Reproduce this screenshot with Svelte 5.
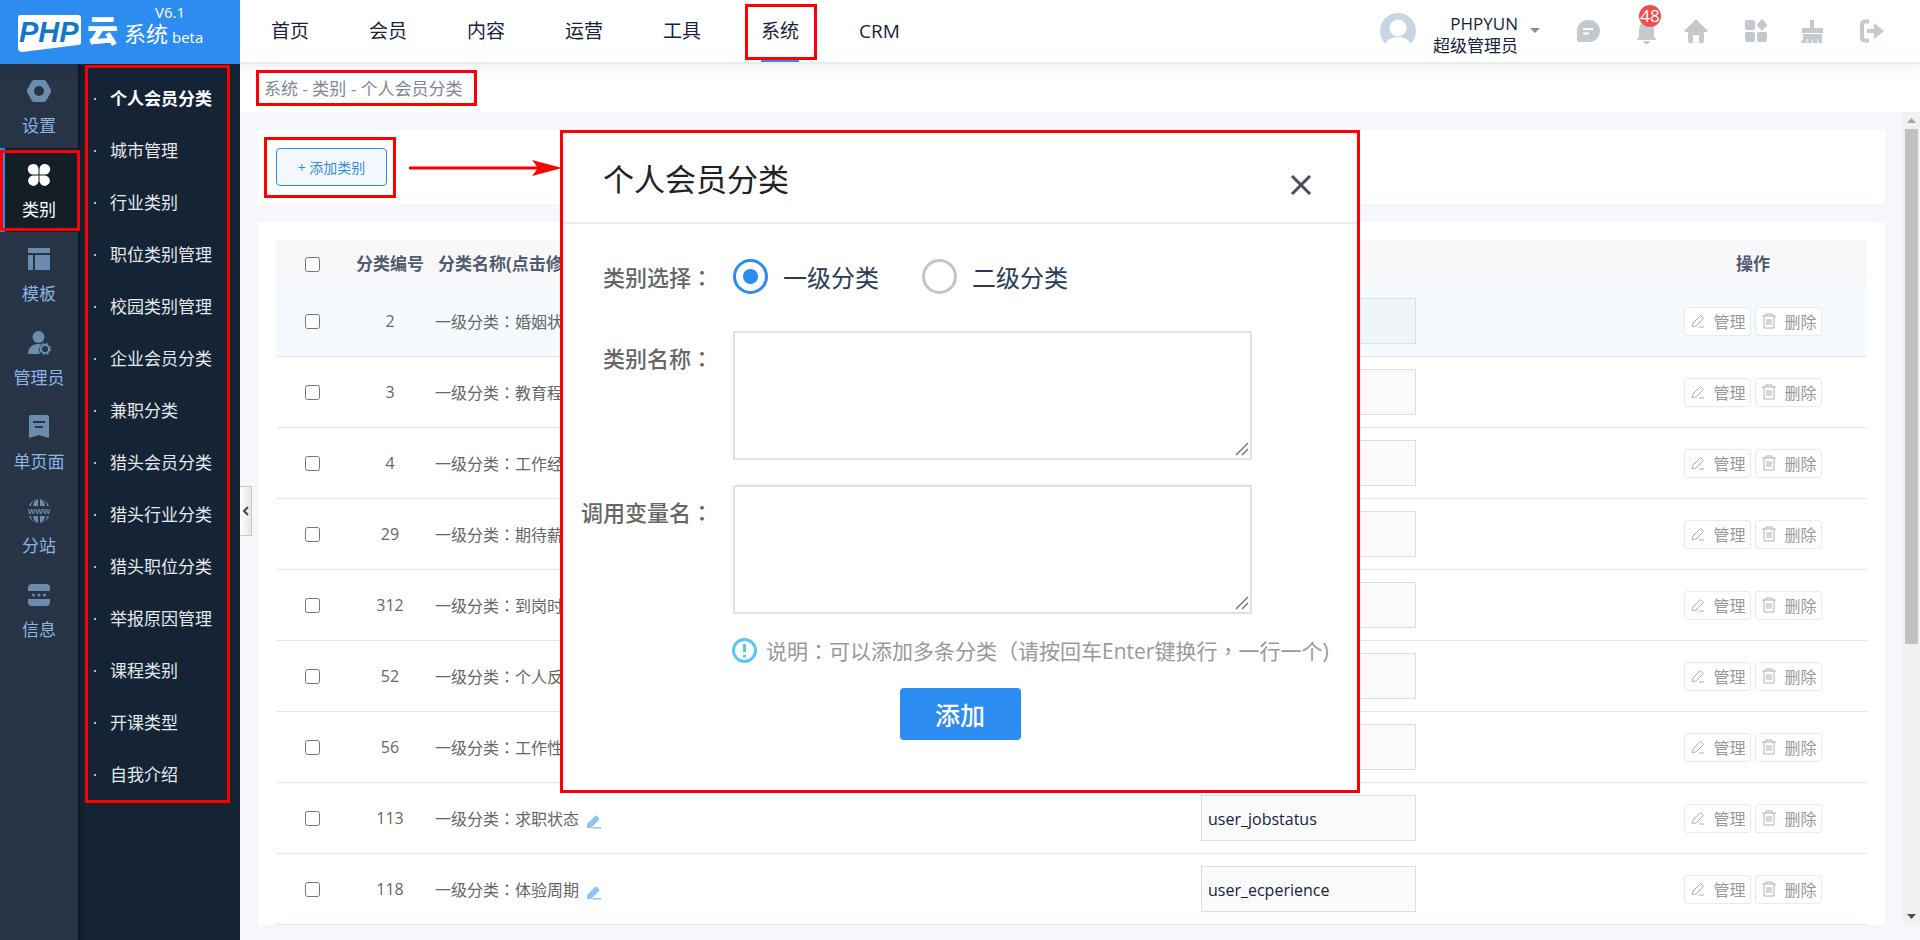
<script>
  const topNav = ["首页", "会员", "内容", "运营", "工具", "系统", "CRM"];
  const sideNav = [
    { label: "设置", icon: "setting" },
    { label: "类别", icon: "category" },
    { label: "模板", icon: "template" },
    { label: "管理员", icon: "admin" },
    { label: "单页面", icon: "page" },
    { label: "分站", icon: "site" },
    { label: "信息", icon: "message" },
  ];
  const subNav = [
    "个人会员分类",
    "城市管理",
    "行业类别",
    "职位类别管理",
    "校园类别管理",
    "企业会员分类",
    "兼职分类",
    "猎头会员分类",
    "猎头行业分类",
    "猎头职位分类",
    "举报原因管理",
    "课程类别",
    "开课类型",
    "自我介绍",
  ];
  const rows = [
    { id: 2, name: "婚姻状况", key: "user_marriage" },
    { id: 3, name: "教育程度", key: "user_edu" },
    { id: 4, name: "工作经验", key: "user_word" },
    { id: 29, name: "期待薪资", key: "user_salary" },
    { id: 312, name: "到岗时间", key: "user_report" },
    { id: 52, name: "个人反馈", key: "user_message" },
    { id: 56, name: "工作性质", key: "user_type" },
    { id: 113, name: "求职状态", key: "user_jobstatus" },
    { id: 118, name: "体验周期", key: "user_ecperience" },
  ];
  let level = "1";
</script>

<header class="header">
  <a class="logo" href="#home" aria-label="PHP云系统">
    <svg width="240" height="64" viewBox="0 0 240 64">
      <path d="M20 15h58q3 0 3 3v24q0 3-3 3l-56 7q-4 0-4-4V18q0-3 2-3z" fill="#fff" />
      <text class="logo-php" x="19" y="42" fill="#1279c9">PHP</text>
      <text class="logo-yun" x="87" y="42" fill="#fff">云</text>
      <text class="logo-sys" x="124" y="42" fill="#fff">系统</text>
      <text class="logo-ver" x="155" y="18" fill="#fff">V6.1</text>
      <text class="logo-ver" x="172" y="43" fill="#fff">beta</text>
    </svg>
  </a>
  <nav class="top-nav">
    {#each topNav as item}
      <a href="#{item}" class:active={item === "系统"}>
        <span>{item}</span>
        {#if item === "系统"}<i class="mark"></i>{/if}
      </a>
    {/each}
  </nav>
  <button class="user">
    <svg width="36" height="36" viewBox="0 0 36 36">
      <circle cx="18" cy="18" r="18" fill="#c8d6e4" />
      <circle cx="18" cy="15" r="8.500" fill="#fff" />
      <path d="M5 32q3-8 13-8t13 8v4H5z" fill="#fff" />
    </svg>
    <span class="user-name">PHPYUN<br />超级管理员</span>
    <svg width="10" height="6" viewBox="0 0 10 6"><path d="M0 0h10L5 5z" fill="#878d99" /></svg>
  </button>
  <div class="tools">
    <button aria-label="消息">
      <svg viewBox="0 0 24 24">
        <path d="M11.500 1H13a10.500 10.500 0 0 1 0 22H3a2 2 0 0 1-2-2v-9.500A10.500 10.500 0 0 1 11.500 1z" />
        <path d="M7 10h10M7 14.500h6" class="cut" />
      </svg>
    </button>
    <button class="bell" aria-label="通知">
      <svg viewBox="0 0 24 24">
        <path d="M10.500 2.500a7.500 7.500 0 0 0-7.500 8V18L1 20v1h19v-1l-2-2v-7.500a7.500 7.500 0 0 0-7.500-8zM7 22h7q-1 3-3.500 3T7 22z" />
      </svg>
      <b>48</b>
    </button>
    <button aria-label="首页">
      <svg viewBox="0 0 24 24">
        <path d="M12 0 1 11q-1 2 1 2h2v9q0 2 2 2h3v-8h6v8h3q2 0 2-2v-9h2q2 0 1-2z" />
      </svg>
    </button>
    <button aria-label="应用">
      <svg viewBox="0 0 24 24">
        <rect x="1" y="1" width="10" height="10" rx="2" />
        <rect x="1" y="13" width="10" height="10" rx="2" />
        <rect x="13" y="13" width="10" height="10" rx="2" />
        <path d="m18 0 5.500 6-5.500 6-5.500-6z" />
      </svg>
    </button>
    <button aria-label="清理">
      <svg viewBox="0 0 24 24">
        <path d="M10 1h4v8h9v5H2V9h8zM3 15h19v9H1q3-4 2-9z" />
        <path d="m8 20-2 4M13 20l-1 4M18 20v4" class="cut thin" />
      </svg>
    </button>
    <button aria-label="退出">
      <svg viewBox="0 0 24 24">
        <path d="M9 2.500H5q-3 0-3 3v13q0 3 3 3h4" class="line" />
        <path d="M14 4v6H7v4h7v6l10-8z" />
      </svg>
    </button>
  </div>
</header>

<div class="layout">
  <nav class="side">
    {#each sideNav as item}
      <a href="#{item.icon}" class:active={item.icon === "category"}>
        <svg width="24" height="24" viewBox="0 0 24 24">
          {#if item.icon === "setting"}
            <path
              fill-rule="evenodd"
              d="M7 1h10q1 0 2 1l5 9q.500 1 0 2l-5 9q-1 1-2 1H7q-1 0-2-1l-5-9q-.500-1 0-2l5-9q1-1 2-1zM12 7a5 5 0 1 0 0 10 5 5 0 0 0 0-10z"
            />
          {:else if item.icon === "category"}
            <path
              d="M6 1a5 5 0 0 1 5.500 5v5.500H6A5.200 5.200 0 0 1 6 1zM18 1a5.200 5.200 0 0 1 0 10.500h-5.500V6A5 5 0 0 1 18 1zM6 12.500h5.500V18A5.200 5.200 0 1 1 6 12.500zM12.500 12.500H18A5.200 5.200 0 1 1 12.500 18z"
            />
          {:else if item.icon === "template"}
            <path d="M1 1h22v5H1zM1 8h5v15H1zM8 8h15v15H8z" />
          {:else if item.icon === "admin"}
            <circle cx="11.500" cy="6" r="6" />
            <path d="M1 23q0-9 9-10h5a7 7 0 0 0-2 10z" />
            <circle cx="18" cy="18" r="4" class="ring" />
            <circle cx="18" cy="18" r="5" class="teeth" />
          {:else if item.icon === "page"}
            <path fill-rule="evenodd" d="M4 0h16q2 0 2 2v21l-10-3-10 3V2q0-2 2-2zM6 6v2h12V6zM8 11v2h8v-2z" />
          {:else if item.icon === "site"}
            <path
              d="M11 0v7H6q1-6 5-7zM13 0q4 1 5 7h-5zM8 1Q4 3 4 7H2Q4 2 8 1zM16 1q4 1 6 6h-2q0-4-4-6zM11 24v-7H6q1 6 5 7zM13 24q4-1 5-7h-5zM8 23q-4-2-4-6H2q2 5 6 6zM16 23q4-1 6-6h-2q0 4-4 6z"
            />
            <text x="12" y="15" text-anchor="middle">WWW</text>
          {:else}
            <path d="M5 1h14q4 0 4 4v3H1V5q0-4 4-4zM1 16h22v3q0 4-4 4H5q-4 0-4-4z" />
            <circle cx="6.500" cy="12" r="1.500" />
            <circle cx="12" cy="12" r="1.500" />
            <circle cx="17.500" cy="12" r="1.500" />
          {/if}
        </svg>
        <span>{item.label}</span>
        {#if item.icon === "category"}<i class="mark"></i>{/if}
      </a>
    {/each}
  </nav>

  <nav class="sub">
    <ul>
      {#each subNav as item, i}
        <li><a href="#{item}" class:active={i === 0}>{item}</a></li>
      {/each}
    </ul>
    <i class="mark"></i>
    <button class="collapse" aria-label="收起">
      <svg width="6" height="10" viewBox="0 0 6 10"><path d="M5 1 1 5l4 4" /></svg>
    </button>
  </nav>

  <main>
    <div class="crumb"><span>系统 - 类别 - 个人会员分类<i class="mark"></i></span></div>
    <div class="content">
      <div class="panels">
        <section class="card toolbar">
          <button class="add">+ 添加类别<i class="mark"></i></button>
        </section>
        <section class="card">
          <table>
            <colgroup>
              <col class="c-check" />
              <col class="c-id" />
              <col class="c-name" />
              <col />
              <col class="c-ops" />
            </colgroup>
            <thead>
              <tr>
                <th><input type="checkbox" aria-label="全选" /></th>
                <th>分类编号</th>
                <th class="name">分类名称(点击修改)</th>
                <th class="key">调用变量名</th>
                <th>操作</th>
              </tr>
            </thead>
            <tbody>
              {#each rows as row, i}
                <tr class:hover={i === 0}>
                  <td><input type="checkbox" aria-label={row.name} /></td>
                  <td>{row.id}</td>
                  <td class="name">
                    一级分类<span class="mid">：</span>{row.name}
                    <svg class="pen" width="14" height="14" viewBox="0 0 14 14">
                      <path d="M0 13V9l8-8q1-1 2 0l2 2q1 1 0 2l-8 8zM6 12h8v1.500H5z" />
                    </svg>
                  </td>
                  <td class="key"><input type="text" value={row.key} aria-label="调用变量名" /></td>
                  <td>
                    <div class="ops">
                      <button>
                        <svg width="14" height="14" viewBox="0 0 14 14">
                          <path d="M1 12.500 2 9l7.500-7.500 3 3L5 12zM8 13h5" />
                        </svg>管理
                      </button>
                      <button>
                        <svg width="14" height="16" viewBox="0 0 14 16">
                          <path d="M0 3h14M4 3V1h6v2M2 3v12h10V3M5 6v6M7 6v6M9 6v6" />
                        </svg>删除
                      </button>
                    </div>
                  </td>
                </tr>
              {/each}
            </tbody>
          </table>
        </section>
      </div>
      <div class="scrollbar" aria-hidden="true">
        <svg width="9" height="5" viewBox="0 0 9 5"><path d="M4.500 0 9 5H0z" fill="#a3a3a3" /></svg>
        <div class="thumb"></div>
        <svg width="9" height="5" viewBox="0 0 9 5"><path d="M0 0h9L4.500 5z" fill="#505050" /></svg>
      </div>
    </div>
  </main>
</div>

<svg class="arrow" width="153" height="16" viewBox="0 0 153 16">
  <path d="M0 6.500h128L123 0l30 8-30 8 5-6.500H0z" fill="#f00" />
</svg>

<div class="dialog" role="dialog" aria-labelledby="dialog-title">
  <div class="dialog-head">
    <h2 id="dialog-title">个人会员分类</h2>
    <button aria-label="关闭">
      <svg width="22" height="22" viewBox="0 0 22 22"><path d="m2 2 18 18M20 2 2 20" /></svg>
    </button>
  </div>
  <form on:submit|preventDefault>
    <div class="field radios">
      <span class="label">类别选择<span class="mid">：</span></span>
      <label><input type="radio" name="level" value="1" bind:group={level} />一级分类</label>
      <label><input type="radio" name="level" value="2" bind:group={level} />二级分类</label>
    </div>
    <div class="field">
      <label class="label" for="cat-name">类别名称<span class="mid">：</span></label>
      <div class="area">
        <textarea id="cat-name"></textarea>
        <svg width="14" height="14" viewBox="0 0 14 14"><path d="M1 13 13 1M7 13l6-6" /></svg>
      </div>
    </div>
    <div class="field">
      <label class="label" for="cat-key">调用变量名<span class="mid">：</span></label>
      <div class="area">
        <textarea id="cat-key"></textarea>
        <svg width="14" height="14" viewBox="0 0 14 14"><path d="M1 13 13 1M7 13l6-6" /></svg>
      </div>
    </div>
    <div class="tip">
      <svg width="25" height="25" viewBox="0 0 25 25">
        <circle cx="12.500" cy="12.500" r="11" />
        <path d="M12.500 6v8M12.500 17v2.500" />
      </svg>
      <p>说明<span class="mid">：</span>可以添加多条分类（请按回车Enter键换行<span class="mid">，</span>一行一个)</p>
    </div>
    <button class="submit">添加</button>
  </form>
</div>

<style>
  :global(body) {
    background: #f5f7fb;
    color: #17233d;
    font-family: "Open Sans", "Noto Sans CJK SC", sans-serif;
    font-size: 17px;
  }
  :global(#app) {
    position: relative;
    min-height: 100vh;
    display: flex;
    flex-direction: column;
    overflow: hidden;
  }
  a {
    color: inherit;
    text-decoration: none;
  }
  button {
    font-family: inherit;
    background: none;
    border: none;
    padding: 0;
    color: inherit;
  }
  /* punctuation centred in its square */
  .mid {
    font-family: "Noto Sans CJK TC", sans-serif;
  }
  .mark {
    position: absolute;
    border: 3px solid #f00;
    pointer-events: none;
    z-index: 3;
  }

  .header {
    position: relative;
    z-index: 2;
    display: flex;
    height: 64px;
    background: #fff;
    border-bottom: 2px solid #e8ebf1;
    box-sizing: border-box;
    box-shadow: 0 2px 15px rgba(0, 0, 0, 0.08);
  }
  .logo {
    width: 240px;
    height: 64px;
    background: #2d8cf0;
  }
  .logo svg {
    display: block;
  }
  .logo-php {
    font: italic 900 29px "Liberation Sans", sans-serif;
  }
  .logo-yun {
    font: 900 31px "Noto Sans CJK SC", sans-serif;
  }
  .logo-sys {
    font: 22px "Noto Sans CJK SC", sans-serif;
  }
  .logo-ver {
    font: 15px "Open Sans", sans-serif;
  }
  .top-nav {
    display: flex;
    flex: 1;
    padding-left: 1px;
  }
  .top-nav a {
    position: relative;
    padding: 0 30px;
    font-size: 19px;
    line-height: 62px;
  }
  .top-nav span {
    display: block;
    height: 60px;
  }
  .top-nav .active span {
    border-bottom: 2px solid #2d8cf0;
  }
  .top-nav .mark {
    inset: 4px 12px 2px 14px;
  }
  .user {
    display: flex;
    align-items: center;
    gap: 12px;
    margin-right: 36px;
    font-size: 17px;
    line-height: 22px;
    text-align: right;
  }
  .user-name {
    padding-top: 8px;
    padding-left: 5px;
  }
  .tools {
    display: grid;
    grid-template-columns: 60px 48px 60px 56px 60px 24px;
    align-items: center;
    padding-right: 36px;
  }
  .tools button {
    position: relative;
    width: 24px;
    height: 24px;
  }
  .tools svg {
    display: block;
    width: 24px;
    height: 24px;
    fill: #c5c8ce;
    overflow: visible;
  }
  .tools .cut {
    stroke: #fff;
    stroke-width: 2;
  }
  .tools .thin {
    stroke-width: 1;
  }
  .tools .line {
    fill: none;
    stroke: #c5c8ce;
    stroke-width: 4;
  }
  .bell b {
    position: absolute;
    top: -14px;
    left: 3px;
    width: 22px;
    height: 22px;
    border-radius: 50%;
    background: #ed4f4f;
    color: #fff;
    font-size: 17px;
    font-weight: normal;
    line-height: 22px;
  }

  .layout {
    display: flex;
    flex: 1;
  }
  .side {
    width: 78px;
    background: #263445;
    color: #8db4e2;
  }
  .side a {
    position: relative;
    display: flex;
    flex-direction: column;
    align-items: center;
    gap: 11px;
    height: 84px;
    padding-top: 15px;
    box-sizing: border-box;
    line-height: 24px;
  }
  .side svg {
    fill: #6c8cae;
    overflow: visible;
  }
  .side text {
    font: bold 8px "Liberation Sans", sans-serif;
  }
  .side .ring {
    fill: #263445;
    stroke: #6c8cae;
    stroke-width: 2;
  }
  .side .teeth {
    fill: none;
    stroke: #6c8cae;
    stroke-width: 2;
    stroke-dasharray: 2 2;
  }
  .side .active {
    background: #141e27;
    box-shadow: inset 5px 0 #2d8cf0;
    color: #fff;
  }
  .side .active svg {
    fill: #fff;
  }
  .side .mark {
    inset: 2px -2px 1px 0;
  }
  .sub {
    position: relative;
    width: 162px;
    background: #152434;
    color: #e4e7eb;
    box-shadow: inset 6px 0 6px -4px rgba(0, 0, 0, 0.4);
  }
  .sub ul {
    margin: 0;
    padding: 9px 0;
    list-style: none;
  }
  .sub li {
    display: flex;
    align-items: center;
    gap: 14px;
    padding-left: 16px;
    line-height: 52px;
  }
  .sub li::before {
    content: "";
    width: 2px;
    height: 2px;
    background: #b5bbc2;
  }
  .sub .active {
    color: #fff;
    font-weight: bold;
  }
  .sub .mark {
    inset: 1px 10px auto 7px;
    height: 732px;
  }
  .collapse {
    position: absolute;
    z-index: 1;
    top: 422px;
    left: 162px;
    width: 12px;
    height: 50px;
    border: 1px solid #c8c8c8;
    border-left: none;
    background: linear-gradient(90deg, #fff, #e6e6e6);
  }
  .collapse path {
    fill: none;
    stroke: #444;
    stroke-width: 2;
  }

  main {
    flex: 1;
    min-width: 0;
    padding-bottom: 15px;
  }
  .crumb {
    height: 48px;
    padding-left: 24px;
    background: #fff;
    color: #808695;
    line-height: 50px;
  }
  .crumb span {
    position: relative;
  }
  .crumb .mark {
    inset: -7px -14px -6px -8px;
  }
  .content {
    display: flex;
  }
  .panels {
    flex: 1;
    padding: 18px 18px 0;
  }
  .card {
    margin-bottom: 18px;
    padding: 18px 18px 0;
    background: #fff;
  }
  .card:last-child {
    margin-bottom: 0;
  }
  .toolbar {
    padding-bottom: 18px;
  }
  .add {
    position: relative;
    display: block;
    width: 111px;
    height: 38px;
    border: 1px solid #2d8cf0;
    border-radius: 4px;
    background: #f4f8fe;
    color: #2d8cf0;
    font-size: 14px;
  }
  .add .mark {
    inset: -12px -10px -13px -13px;
  }
  table {
    width: 100%;
    border-collapse: separate;
    border-spacing: 0;
    table-layout: fixed;
    color: #666;
    font-size: 16px;
  }
  .c-check {
    width: 73px;
  }
  .c-id {
    width: 82px;
  }
  .c-name {
    width: 770px;
  }
  .c-ops {
    width: 228px;
  }
  th {
    height: 44px;
    padding: 2px 0 0;
    background: #f8f8fa;
    color: #515a6e;
    font-size: 17px;
    line-height: 24px;
  }
  td {
    height: 70px;
    padding: 0;
    border-bottom: 1px solid #e6e7ea;
    line-height: 24px;
    text-align: center;
  }
  td.name {
    padding-left: 4px;
    text-align: left;
  }
  th.name {
    padding-left: 7px;
    text-align: left;
  }
  th.key,
  td.key {
    text-align: left;
  }
  .hover td {
    background: #f5faff;
  }
  input[type="checkbox"] {
    display: block;
    width: 15px;
    height: 15px;
    margin: 0 auto;
  }
  .pen {
    margin-left: 4px;
    fill: #8cc5f5;
    vertical-align: -4px;
  }
  .key input {
    display: block;
    width: 215px;
    height: 46px;
    padding: 2px 6px 0;
    border: 1px solid #dcdee2;
    box-sizing: border-box;
    background: rgba(0, 0, 0, 0.02);
    color: #17233d;
    font-family: inherit;
    font-size: 16px;
  }
  .ops {
    display: flex;
    justify-content: center;
    gap: 4px;
  }
  .ops button {
    display: flex;
    align-items: center;
    justify-content: center;
    gap: 8px;
    width: 67px;
    height: 29px;
    padding-left: 2px;
    border: 1px solid #e8eaec;
    border-radius: 3px;
    background: #fff;
    color: #999;
    font-size: 16px;
  }
  .ops path {
    fill: none;
    stroke: #b0b0b0;
    stroke-width: 1;
  }
  .scrollbar {
    display: flex;
    flex-direction: column;
    align-items: center;
    width: 17px;
    padding: 6px 0;
    box-sizing: border-box;
    background: #f1f1f1;
  }
  .thumb {
    width: 13px;
    height: 515px;
    margin: 6px 0 auto;
    background: #c1c1c1;
  }

  .arrow {
    position: absolute;
    z-index: 4;
    top: 160px;
    left: 409px;
  }
  .dialog {
    position: absolute;
    z-index: 3;
    top: 130px;
    left: 560px;
    width: 800px;
    border: 3px solid #f00;
    box-sizing: border-box;
    background: #fff;
  }
  .dialog-head {
    display: flex;
    align-items: center;
    justify-content: space-between;
    padding: 0 45px 0 40px;
    border-bottom: 2px solid #eee;
  }
  h2 {
    height: 89px;
    margin: 0;
    color: #222;
    font-size: 31px;
    font-weight: normal;
    line-height: 92px;
  }
  .dialog-head svg {
    display: block;
    margin-top: 14px;
  }
  .dialog-head path {
    stroke: #4a4d58;
    stroke-width: 3;
  }
  form {
    padding: 34px 0 50px;
  }
  .field {
    display: flex;
    margin-bottom: 25px;
  }
  .label {
    width: 150px;
    margin-right: 20px;
    color: #666;
    font-size: 22px;
    font-weight: 500;
    line-height: 52px;
    text-align: right;
  }
  .radios {
    align-items: center;
    height: 36px;
    margin-bottom: 37px;
  }
  .radios label {
    display: flex;
    align-items: center;
    gap: 15px;
    margin-right: 43px;
    color: #2b3a58;
    font-size: 24px;
  }
  input[type="radio"] {
    appearance: none;
    width: 35px;
    height: 35px;
    margin: 0;
    border: 3px solid #c4c4c4;
    border-radius: 50%;
  }
  input[type="radio"]:checked {
    border-color: #2d8cf0;
    background: radial-gradient(circle, #2d8cf0 7px, #fff 8px);
  }
  .area {
    position: relative;
    width: 519px;
  }
  textarea {
    display: block;
    width: 100%;
    height: 129px;
    border: 2px solid #e2e2e2;
    box-sizing: border-box;
    resize: none;
    font-family: inherit;
    font-size: 22px;
  }
  .area svg {
    position: absolute;
    right: 3px;
    bottom: 4px;
  }
  .area path {
    fill: none;
    stroke: #777;
    stroke-width: 1.500;
  }
  .tip {
    display: flex;
    align-items: center;
    gap: 9px;
    height: 30px;
    margin: 21px 0 23px 169px;
    color: #999;
    font-size: 21px;
    line-height: 30px;
    white-space: nowrap;
  }
  .tip p {
    margin: 0;
  }
  .field:last-of-type {
    margin-bottom: 0;
  }
  .tip svg {
    fill: none;
    stroke: #5cc4f7;
    stroke-width: 3;
  }
  .field + .tip {
    margin-top: -4px;
    padding-top: 0;
  }
  .submit {
    display: block;
    width: 121px;
    height: 52px;
    margin: 0 auto;
    border-radius: 4px;
    background: #2d8cf0;
    color: #fff;
    font-size: 25px;
    font-weight: 500;
  }
</style>
